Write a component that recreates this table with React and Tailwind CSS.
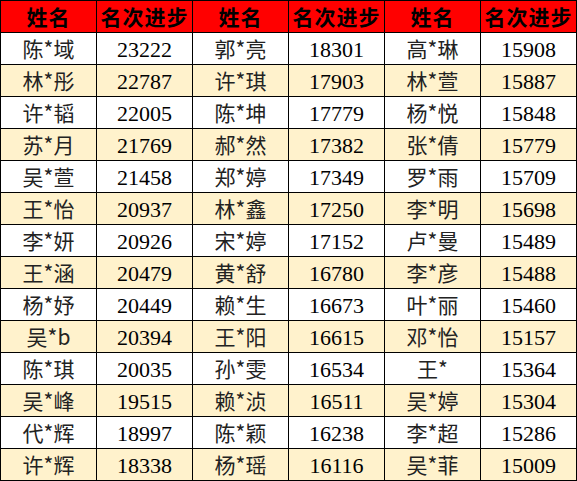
import React from "react";

const rows = [
  ["陈*域", "23222", "郭*亮", "18301", "高*琳", "15908"],
  ["林*彤", "22787", "许*琪", "17903", "林*萱", "15887"],
  ["许*韬", "22005", "陈*坤", "17779", "杨*悦", "15848"],
  ["苏*月", "21769", "郝*然", "17382", "张*倩", "15779"],
  ["吴*萱", "21458", "郑*婷", "17349", "罗*雨", "15709"],
  ["王*怡", "20937", "林*鑫", "17250", "李*明", "15698"],
  ["李*妍", "20926", "宋*婷", "17152", "卢*曼", "15489"],
  ["王*涵", "20479", "黄*舒", "16780", "李*彦", "15488"],
  ["杨*妤", "20449", "赖*生", "16673", "叶*丽", "15460"],
  ["吴*b", "20394", "王*阳", "16615", "邓*怡", "15157"],
  ["陈*琪", "20035", "孙*雯", "16534", "王*", "15364"],
  ["吴*峰", "19515", "赖*浈", "16511", "吴*婷", "15304"],
  ["代*辉", "18997", "陈*颖", "16238", "李*超", "15286"],
  ["许*辉", "18338", "杨*瑶", "16116", "吴*菲", "15009"],
];

const headers = ["姓名", "名次进步", "姓名", "名次进步", "姓名", "名次进步"];

const cellBase = "h-[32px] flex items-center justify-center border-r border-b border-black";
const nameCls = "text-[21px] text-[#222] font-['Noto_Sans_CJK_SC',sans-serif]";
const numCls = "text-[22px] text-black font-['Liberation_Serif',serif] pt-[1px]";

const App = () => {
  return (
    <div className="w-[577px] h-[481px] bg-white">
      <div className="grid grid-cols-[repeat(6,96px)] border-l border-t border-black w-[577px]">
        {/* Header */}
        {headers.map((h, i) => (
          <div
            key={"h" + i}
            className={cellBase + " bg-[#ff0000] text-[21px] font-bold text-black tracking-[1px] font-['Noto_Sans_CJK_SC',sans-serif]"}
          >
            {h}
          </div>
        ))}

        {/* Body rows */}
        {rows.map((row, r) =>
          row.map((cell, c) => (
            <div
              key={r + "-" + c}
              className={
                cellBase +
                " " +
                (r % 2 === 1 ? "bg-[#fff2cc]" : "bg-white") +
                " " +
                (c % 2 === 0 ? nameCls : numCls)
              }
            >
              {cell}
            </div>
          ))
        )}
      </div>
    </div>
  );
};

export default App;
